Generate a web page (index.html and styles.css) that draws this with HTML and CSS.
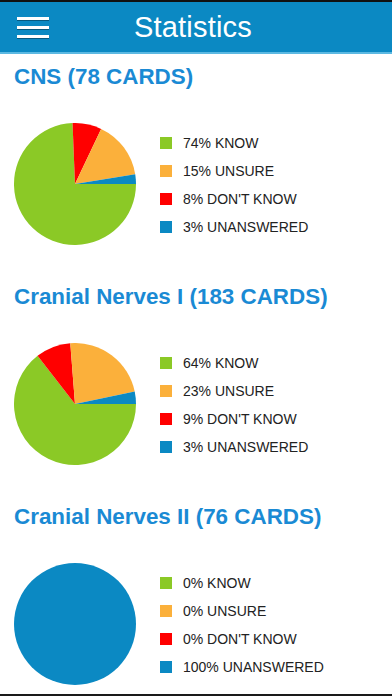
FILE: index.html
```html
<!DOCTYPE html>
<html lang="en">
<head>
  <meta charset="UTF-8">
  <title>Statistics</title>
  <link rel="stylesheet" href="styles.css">
</head>
<body>
<div class="screen">

  <header class="topbar">
    <div class="menu-btn">
      <span></span><span></span><span></span>
    </div>
    <h1>Statistics</h1>
    <div></div>
  </header>

  <main class="stats">

    <section class="deck">
      <h2>CNS (78 CARDS)</h2>
      <div class="deck-body">
        <svg class="pie" viewBox="0 0 122 122">
          <path class="know" d="M61 61 L58.54 0.05 A61 61 0 1 0 122 61 Z"/>
          <path class="dunno" d="M61 61 L87.14 5.89 A61 61 0 0 0 58.54 0.05 Z"/>
          <path class="unsure" d="M61 61 L121.21 51.22 A61 61 0 0 0 87.14 5.89 Z"/>
          <path class="unanswered" d="M61 61 L122 61 A61 61 0 0 0 121.21 51.22 Z"/>
        </svg>
        <ul class="legend">
          <li><i class="sw know"></i>74% KNOW</li>
          <li><i class="sw unsure"></i>15% UNSURE</li>
          <li><i class="sw dunno"></i>8% DON'T KNOW</li>
          <li><i class="sw unanswered"></i>3% UNANSWERED</li>
        </ul>
      </div>
    </section>

    <section class="deck">
      <h2>Cranial Nerves I (183 CARDS)</h2>
      <div class="deck-body">
        <svg class="pie" viewBox="0 0 122 122">
          <path class="know" d="M61 61 L23.55 12.85 A61 61 0 1 0 122 61 Z"/>
          <path class="dunno" d="M61 61 L56.29 0.18 A61 61 0 0 0 23.55 12.85 Z"/>
          <path class="unsure" d="M61 61 L120.71 48.53 A61 61 0 0 0 56.29 0.18 Z"/>
          <path class="unanswered" d="M61 61 L122 61 A61 61 0 0 0 120.71 48.53 Z"/>
        </svg>
        <ul class="legend">
          <li><i class="sw know"></i>64% KNOW</li>
          <li><i class="sw unsure"></i>23% UNSURE</li>
          <li><i class="sw dunno"></i>9% DON'T KNOW</li>
          <li><i class="sw unanswered"></i>3% UNANSWERED</li>
        </ul>
      </div>
    </section>

    <section class="deck">
      <h2>Cranial Nerves II (76 CARDS)</h2>
      <div class="deck-body">
        <svg class="pie" viewBox="0 0 122 122">
          <circle class="unanswered" cx="61" cy="61" r="61"/>
        </svg>
        <ul class="legend">
          <li><i class="sw know"></i>0% KNOW</li>
          <li><i class="sw unsure"></i>0% UNSURE</li>
          <li><i class="sw dunno"></i>0% DON'T KNOW</li>
          <li><i class="sw unanswered"></i>100% UNANSWERED</li>
        </ul>
      </div>
    </section>

  </main>

  <div class="bottom-edge"></div>
</div>
</body>
</html>
```

FILE: styles.css
```css
* { box-sizing: border-box; }

body {
  margin: 0;
  background: #fff;
  font-family: 'Liberation Sans', Arial, sans-serif;
}

.screen {
  width: 392px;
  height: 696px;
  display: flex;
  flex-direction: column;
  overflow: hidden;
}

.topbar {
  height: 54px;
  background: #0b89c3;
  border-top: 2px solid #111;
  border-bottom: 2px solid #5cb9e2;
  display: grid;
  grid-template-columns: 1fr auto 1fr;
  align-items: center;
  color: #fff;
}

.topbar h1 {
  margin: 0 6px 0 0;
  font-size: 29px;
  font-weight: normal;
  letter-spacing: 0.2px;
}

.menu-btn {
  display: flex;
  flex-direction: column;
  gap: 6px;
  padding-left: 17px;
}

.menu-btn span {
  display: block;
  width: 32px;
  height: 3px;
  background: #fff;
  box-shadow: 0 1px 0 rgba(0,0,0,0.35);
}

.stats {
  flex: 1;
  padding: 10px 0 0 14px;
  overflow: hidden;
}

.deck {
  margin-bottom: 39px;
}

.deck h2 {
  margin: 0 0 33px;
  height: 26px;
  line-height: 26px;
  font-size: 22.4px;
  font-weight: bold;
  color: #1a8ad4;
}

.deck-body {
  display: flex;
  align-items: center;
  gap: 24px;
}

.pie {
  width: 122px;
  height: 122px;
  display: block;
}

.know { fill: #8bc926; background: #8bc926; }
.unsure { fill: #fbb03b; background: #fbb03b; }
.dunno { fill: #ff0000; background: #ff0000; }
.unanswered { fill: #0b89c3; background: #0b89c3; }

.legend {
  list-style: none;
  margin: 2px 0 0;
  padding: 0;
}

.legend li {
  height: 28px;
  display: flex;
  align-items: center;
  gap: 11px;
  font-size: 14px;
  color: #222;
}

.sw {
  width: 12px;
  height: 12px;
  display: block;
}

.bottom-edge {
  height: 2px;
  background: #1a1a1a;
}
```
